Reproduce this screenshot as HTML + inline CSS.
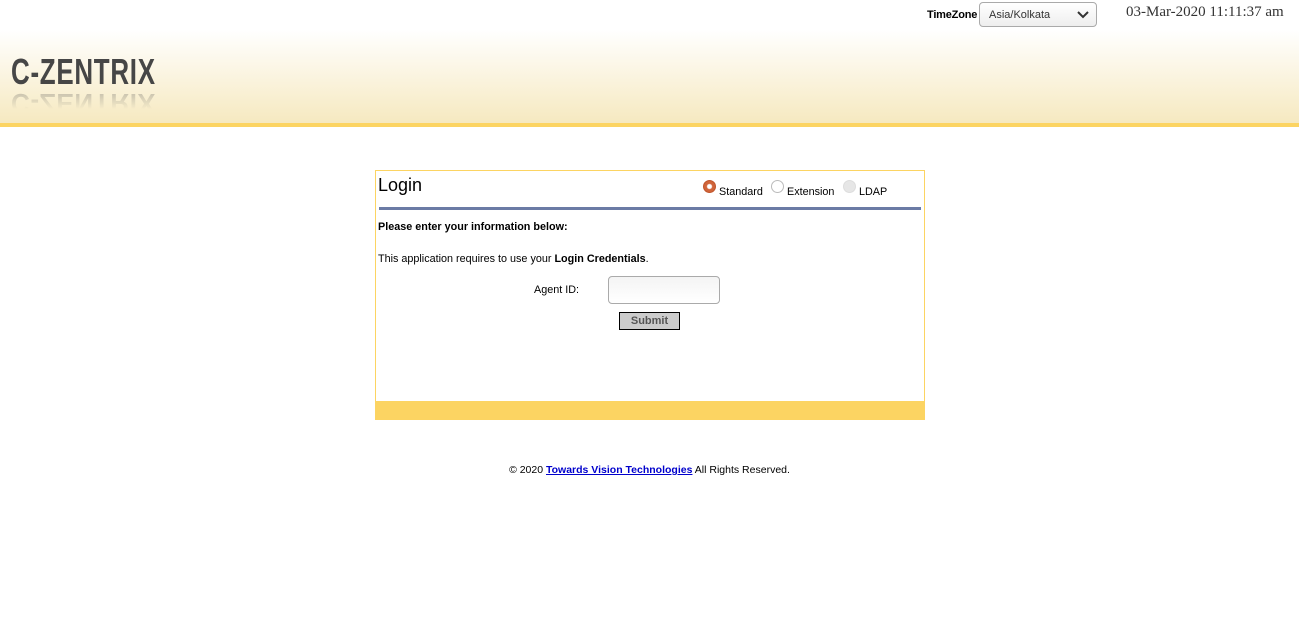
<!DOCTYPE html>
<html><head><style>
body{margin:0;width:1299px;height:639px;background:#fff;font-family:"Liberation Sans",sans-serif;position:relative;overflow:hidden}
.hdr{position:absolute;left:0;top:0;width:1299px;height:123px;background:linear-gradient(#fff 0,#fff 30px,#f6e9c0 123px)}
.bar{position:absolute;left:0;top:123px;width:1299px;height:4px;background:#fcd462}
.logo{position:absolute;left:11px;top:52px;font:bold 36px "Liberation Sans",sans-serif;color:#464646;letter-spacing:1px;transform:scaleX(0.72);transform-origin:left;line-height:40px}
.refl{position:absolute;left:11px;font:bold 36px "Liberation Sans",sans-serif;letter-spacing:1px;transform:scaleX(0.72) scaleY(-0.75);transform-origin:left top;line-height:40px;top:118px;background:linear-gradient(to top,rgba(70,70,70,.35),rgba(70,70,70,0) 70%);-webkit-background-clip:text;background-clip:text;color:transparent}
.tz{position:absolute;left:927px;top:9px;font-size:11px;font-weight:bold;letter-spacing:-0.2px}
.sel{position:absolute;left:979px;top:2px;width:116px;height:23px;border:1px solid #aaa;border-radius:4px;background:linear-gradient(#fff,#eee);font-size:11px;color:#333}
.sel span{position:absolute;left:9px;top:6px}
.date{position:absolute;left:1126px;top:4px;font:15px "Liberation Serif",serif;color:#333}
.box{position:absolute;left:375px;top:170px;width:548px;height:248px;border:1px solid #fcd462}
.foot{position:absolute;left:0;top:230px;width:548px;height:18px;background:#fcd462}
.rule{position:absolute;left:3px;top:36px;width:542px;height:3px;background:#6b7ba5}
.t{position:absolute;font-size:10.8px;color:#000}
.r{position:absolute;width:11px;height:11px;border-radius:50%;border:1px solid #bbb;background:#fff;top:9px}
</style></head><body>
<div class="hdr"></div><div class="bar"></div>
<div class="refl">C-ZENTRIX</div>
<div class="logo">C-ZENTRIX</div>
<div class="tz">TimeZone</div>
<div class="sel"><span>Asia/Kolkata</span><svg style="position:absolute;left:97px;top:7px" width="12" height="9"><path d="M1 2l5 5 5-5" stroke="#333" stroke-width="2" fill="none"/></svg></div>
<div class="date">03-Mar-2020 11:11:37 am</div>
<div class="box">
<div class="t" style="left:2px;top:4px;font-size:18px">Login</div>
<div class="r" style="left:327px;background:radial-gradient(#fff 2px,#d0643a 3px);border-color:#c0552c"></div>
<div class="t" style="left:343px;top:15px">Standard</div>
<div class="r" style="left:395px"></div>
<div class="t" style="left:411px;top:15px">Extension</div>
<div class="r" style="left:467px;background:#e6e6e6;border-color:#ddd"></div>
<div class="t" style="left:483px;top:15px">LDAP</div>
<div class="rule"></div>
<div class="t" style="left:2px;top:50px;font-weight:bold">Please enter your information below:</div>
<div class="t" style="left:2px;top:82px">This application requires to use your <b>Login Credentials</b>.</div>
<div class="t" style="left:158px;top:113px">Agent ID:</div>
<div style="position:absolute;left:232px;top:105px;width:110px;height:26px;border:1px solid #aaa;border-radius:4px;background:linear-gradient(#f4f4f4,#fff)"></div>
<div style="position:absolute;left:243px;top:141px;width:59px;height:16px;border:1px solid #000;background:#ccc;font-size:11px;font-weight:bold;color:#555;text-align:center;line-height:16px">Submit</div>
<div class="foot"></div>
</div>
<div class="t" style="left:0;width:1299px;text-align:center;top:464px;font-size:10.5px">© 2020 <a style="color:#00c;font-weight:bold;text-decoration:underline">Towards Vision Technologies</a> All Rights Reserved.</div>
</body></html>
